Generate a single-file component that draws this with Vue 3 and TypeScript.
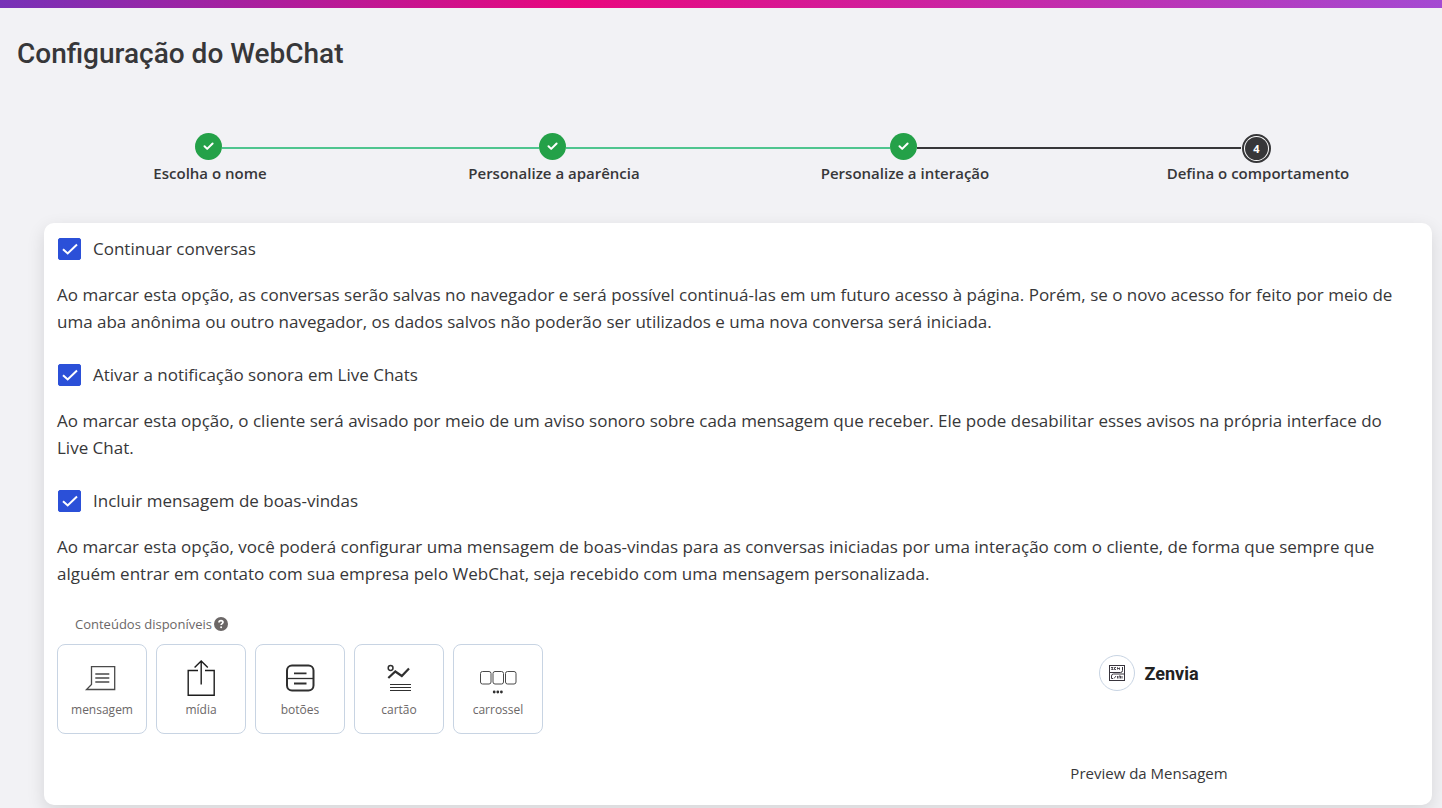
<script setup lang="ts">
import { ref } from 'vue'

interface Step {
  label: string
  done: boolean
}

interface Option {
  id: string
  label: string
  help: string
  checked: boolean
}

type ContentKind = 'mensagem' | 'mídia' | 'botões' | 'cartão' | 'carrossel'

const steps: Step[] = [
  { label: 'Escolha o nome', done: true },
  { label: 'Personalize a aparência', done: true },
  { label: 'Personalize a interação', done: true },
  { label: 'Defina o comportamento', done: false },
]

const options = ref<Option[]>([
  {
    id: 'continuar',
    label: 'Continuar conversas',
    help: 'Ao marcar esta opção, as conversas serão salvas no navegador e será possível continuá-las em um futuro acesso à página. Porém, se o novo acesso for feito por meio de uma aba anônima ou outro navegador, os dados salvos não poderão ser utilizados e uma nova conversa será iniciada.',
    checked: true,
  },
  {
    id: 'notificacao',
    label: 'Ativar a notificação sonora em Live Chats',
    help: 'Ao marcar esta opção, o cliente será avisado por meio de um aviso sonoro sobre cada mensagem que receber. Ele pode desabilitar esses avisos na própria interface do Live Chat.',
    checked: true,
  },
  {
    id: 'boas-vindas',
    label: 'Incluir mensagem de boas-vindas',
    help: 'Ao marcar esta opção, você poderá configurar uma mensagem de boas-vindas para as conversas iniciadas por uma interação com o cliente, de forma que sempre que alguém entrar em contato com sua empresa pelo WebChat, seja recebido com uma mensagem personalizada.',
    checked: true,
  },
])

const contents: ContentKind[] = ['mensagem', 'mídia', 'botões', 'cartão', 'carrossel']
</script>

<template>
  <div class="page">
    <div class="brand-bar"></div>
    <h1 class="title">Configuração do WebChat</h1>

    <ol class="stepper">
      <li v-for="(step, i) in steps" :key="step.label" class="step">
        <div class="track">
          <span class="line" :class="{ hidden: i === 0, dark: !step.done }"></span>
          <span v-if="step.done" class="dot">
            <svg width="27" height="27" viewBox="0 0 27 27" aria-hidden="true">
              <path d="M9.5 13.3l2.7 2.6 5.4-5.4" fill="none" stroke="#fff" stroke-width="2" stroke-linecap="round" stroke-linejoin="round" />
            </svg>
          </span>
          <span v-else class="dot current"><span class="number">{{ i + 1 }}</span></span>
          <span class="line" :class="{ hidden: i === steps.length - 1, dark: i === 2 }"></span>
        </div>
        <span class="step-label">{{ step.label }}</span>
      </li>
    </ol>

    <main class="card">
      <section v-for="option in options" :key="option.id" class="option">
        <label class="option-label" :for="option.id">
          <input :id="option.id" v-model="option.checked" type="checkbox" class="check" />
          <svg class="tick" viewBox="0 0 23 22" aria-hidden="true">
            <path d="M5 11.2l4.7 4.3L19 6.5" fill="none" stroke="#fff" stroke-width="2" />
          </svg>
          <span>{{ option.label }}</span>
        </label>
        <p class="help">{{ option.help }}</p>
      </section>

      <div class="builder">
        <div class="palette">
          <div class="palette-title">
            <span>Conteúdos disponíveis</span>
            <svg width="14" height="14" viewBox="0 0 14 14" aria-hidden="true">
              <circle cx="7" cy="7" r="7" fill="#6b6767" />
              <path d="M5 5.5C5 4 6 3.6 7 3.6s2 .6 2 1.7C9 6.700 7.100 6.500 7.100 8.100" fill="none" stroke="#fff" stroke-width="1.700" />
              <circle cx="7.100" cy="10.200" r="1" fill="#fff" />
            </svg>
          </div>
          <div class="tiles">
            <button v-for="kind in contents" :key="kind" type="button" class="tile">
              <svg class="icon" viewBox="0 0 40 40" fill="none" aria-hidden="true">
                <g v-if="kind === 'mensagem'" stroke="#4a4a4a" stroke-width="1.300">
                  <path d="M9.500 8.600h23.200v22.900H4.500l5-5z" />
                  <path d="M13.300 16h14M13.300 20h14M13.300 24h14" />
                </g>
                <g v-else-if="kind === 'mídia'" stroke="#1d1d1d" stroke-width="1.400">
                  <path d="M17 12.500H7.200v24.800h26V12.500H24" />
                  <path d="M20.200 26.500V3M13.600 9.600l6.600-6.600 6.600 6.600" />
                </g>
                <g v-else-if="kind === 'botões'" stroke="#2f2f2f">
                  <rect x="7" y="7.500" width="26.500" height="25" rx="5" stroke-width="2" />
                  <path d="M7 20.500h26.500" stroke-width="1.300" />
                  <path d="M14 15.300h12.500M14 25.500h12.500" stroke-width="1.800" />
                </g>
                <g v-else-if="kind === 'cartão'" stroke="#303030">
                  <circle cx="11.600" cy="10" r="2.400" stroke-width="1.500" />
                  <path d="M9.300 20l7-6.500 6.500 4.500 7.200-7.500" stroke-width="2.200" />
                  <path d="M11 26.500h21M11 29.500h21M11 32.500h21" stroke-width="1" />
                </g>
                <g v-else stroke="#4a4a4a">
                  <rect x="2.500" y="13.500" width="10.500" height="12.500" rx="2" />
                  <rect x="15" y="13.500" width="10.500" height="12.500" rx="2" />
                  <rect x="27.500" y="13.500" width="10.500" height="12.500" rx="2" />
                  <g fill="#303030" stroke="none">
                    <circle cx="16.200" cy="34" r="1.400" />
                    <circle cx="19.800" cy="34" r="1.400" />
                    <circle cx="23.400" cy="34" r="1.400" />
                  </g>
                </g>
              </svg>
              <span>{{ kind }}</span>
            </button>
          </div>
        </div>

        <aside class="preview">
          <div class="sender">
            <span class="avatar">
              <svg width="16" height="16" viewBox="0 0 16 16" fill="none" stroke="#38343c" aria-hidden="true">
                <rect x=".5" y=".5" width="15" height="15" stroke-width="1" />
                <path d="M.5 7.500h11q2 0 2-2V2M15.500 9H4.500Q2.500 9 2.500 11v2.500h1.500" stroke-width="1" />
                <path d="M2 2.500h2L2.500 4.500h2M7 2.500H5.500v2H7M8.500 4.500v-2l2 2v-2" stroke-width=".9" />
                <path d="M5 13.500l2-2.500M8.500 11v2.500M10 13.500V11h1.500v2.500M13 13.500V11" stroke-width=".9" />
              </svg>
            </span>
            <strong>Zenvia</strong>
          </div>
          <p class="caption">Preview da Mensagem</p>
        </aside>
      </div>
    </main>
  </div>
</template>

<style>
body {
  background: #f2f2f5;
}
</style>

<style scoped>
.page {
  color: #373739;
  font-family: "Open Sans", "Noto Sans", sans-serif;
  font-size: 17px;
}

.brand-bar {
  height: 8px;
  background: linear-gradient(90deg, #7732b7 0%, #e9087e 40%, #a44ad2 100%);
}

.title {
  margin: 0;
  padding: 28px 17px 0;
  font-family: Roboto, sans-serif;
  font-size: 28px;
  line-height: 36px;
  font-weight: 500;
}

.stepper {
  display: grid;
  grid-template-columns: 344fr 344fr 358fr 348fr;
  margin: 0;
  padding: 61px 12px 0 36px;
  list-style: none;
}

.step {
  display: flex;
  flex-direction: column;
}

.track {
  display: flex;
  height: 30px;
}

.line {
  flex: 1;
  height: 2px;
  margin-top: 14px;
  background: #4fc58f;
}

.line.dark {
  background: #373739;
}

.line.hidden {
  visibility: hidden;
}

.dot {
  display: flex;
  width: 27px;
  height: 27px;
  border-radius: 50%;
  background: #24a148;
}

.dot.current {
  align-self: flex-end;
  box-sizing: border-box;
  width: 29px;
  height: 29px;
  margin-left: 1px;
  padding: 1px;
  border: 2px solid #373739;
  background: #fff;
}

.number {
  flex: 1;
  border-radius: 50%;
  background: #373739;
  color: #fff;
  font-size: 11px;
  line-height: 23px;
  font-weight: 700;
  text-align: center;
}

.step-label {
  padding-left: 4px;
  font-size: 15px;
  line-height: 20px;
  font-weight: 600;
  text-align: center;
}

.card {
  margin: 40px 10px 3px 44px;
  padding: 13px 13px 21px;
  border-radius: 10px;
  background: #fff;
  box-shadow: 0 6px 18px rgba(0, 0, 0, 0.12);
}

.option {
  margin-bottom: 27px;
}

.option-label {
  display: grid;
  grid-template-columns: 23px 1fr;
  align-items: center;
  column-gap: 12px;
  padding-left: 1px;
  line-height: 26px;
}

.check,
.tick {
  grid-area: 1 / 1;
  width: 23px;
  height: 22px;
  margin: 0;
}

.check {
  appearance: none;
  border: 1px solid #2b50d8;
  border-radius: 2px;
}

.check:checked {
  background: #2b50d8;
}

.tick {
  pointer-events: none;
}

.help {
  margin: 19px 0 0;
  padding-right: 13px;
  line-height: 27px;
}

.builder {
  display: flex;
  justify-content: space-between;
}

.palette-title {
  display: flex;
  align-items: center;
  gap: 2px;
  padding-left: 18px;
  color: #6b6767;
  font-size: 13px;
  line-height: 20px;
}

.tiles {
  display: flex;
  gap: 9px;
  margin-top: 10px;
}

.tile {
  display: flex;
  flex-direction: column;
  align-items: center;
  width: 90px;
  height: 90px;
  padding: 13px 0 0;
  border: 1px solid #c8d4e3;
  border-radius: 8px;
  background: #fff;
  color: #6b6767;
  font-family: inherit;
  font-size: 12px;
  line-height: 18px;
}

.icon {
  width: 40px;
  height: 40px;
  margin-bottom: 3px;
}

.preview {
  display: flex;
  flex-direction: column;
  align-items: center;
  width: 540px;
  padding-top: 41px;
}

.sender {
  display: flex;
  align-items: center;
  gap: 9px;
  color: #222;
  font-family: Roboto, sans-serif;
  font-size: 18px;
}

.avatar {
  display: flex;
  align-items: center;
  justify-content: center;
  width: 34px;
  height: 34px;
  border: 1px solid #c8d4e3;
  border-radius: 50%;
}

.caption {
  margin: 71px 0 0;
  font-size: 15px;
  line-height: 22px;
}
</style>
